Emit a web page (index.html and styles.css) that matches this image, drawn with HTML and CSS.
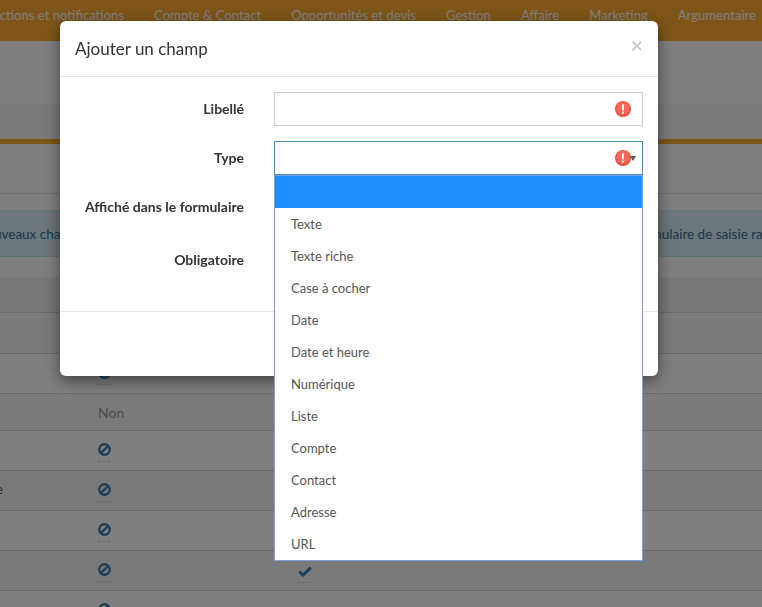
FILE: index.html
```html
<!DOCTYPE html>
<html lang="fr">
<head>
<meta charset="utf-8">
<title>Ajouter un champ</title>
<link rel="stylesheet" href="styles.css">
</head>
<body>
<svg class="defs" width="0" height="0" aria-hidden="true">
  <symbol id="ban" viewBox="0 0 13 13"><circle cx="6.5" cy="6.5" r="5.2" fill="none" stroke="currentColor" stroke-width="2.4"/><path d="M3 10 10 3" stroke="currentColor" stroke-width="2.4"/></symbol>
  <symbol id="check" viewBox="0 0 14 11"><path d="M1.2 5.4 5 9 12.8 1.6" fill="none" stroke="currentColor" stroke-width="3"/></symbol>
  <symbol id="alert" viewBox="0 0 16 16"><circle cx="8" cy="8" r="8" fill="#e9503f"/><circle cx="8" cy="7" r="6.6" fill="#f4695a"/><rect x="7" y="3.2" width="2" height="6.3" rx=".8" fill="#fff"/><rect x="7" y="10.6" width="2" height="2.1" rx=".6" fill="#fff"/></symbol>
</svg>
<div class="page">
  <nav class="nav">
    <a>Actions et notifications</a><a>Compte &amp; Contact</a><a>Opportunités et devis</a><a>Gestion</a><a>Affaire</a><a>Marketing</a><a>Argumentaire</a>
  </nav>
  <div class="band-title"></div>
  <div class="band-tabs"></div>
  <div class="rule"></div>
  <div class="band-sub"></div>
  <div class="info"><span class="info-left">Ajoutez ici de nouveaux champs</span><span class="info-right">du formulaire de saisie rapide</span></div>
  <div class="thead"></div>
  <div class="row tall"></div>
  <div class="row alt"><span></span><span class="cell"><svg class="ban"><use href="#ban"/></svg></span></div>
  <div class="row short"><span></span><span class="cell non">Non</span></div>
  <div class="row alt"><span></span><span class="cell"><svg class="ban"><use href="#ban"/></svg></span></div>
  <div class="row"><span class="first">Téléphone</span><span class="cell"><svg class="ban"><use href="#ban"/></svg></span></div>
  <div class="row alt"><span></span><span class="cell"><svg class="ban"><use href="#ban"/></svg></span></div>
  <div class="row"><span></span><span class="cell"><svg class="ban"><use href="#ban"/></svg></span><span class="cell"><svg class="check"><use href="#check"/></svg></span></div>
  <div class="row alt"><span></span><span class="cell"><svg class="ban"><use href="#ban"/></svg></span><span class="cell"><svg class="check"><use href="#check"/></svg></span></div>
</div>
<div class="backdrop"></div>
<div class="modal">
  <div class="modal-header"><h4>Ajouter un champ</h4><span class="close">×</span></div>
  <div class="modal-body">
    <div class="form-row"><label>Libellé</label><div class="field"><svg class="alert"><use href="#alert"/></svg></div></div>
    <div class="form-row"><label>Type</label>
      <div class="field focus"><svg class="alert"><use href="#alert"/></svg><span class="caret"></span>
        <ul class="dropdown">
          <li class="selected"></li><li>Texte</li><li>Texte riche</li><li>Case à cocher</li><li>Date</li><li>Date et heure</li><li>Numérique</li><li>Liste</li><li>Compte</li><li>Contact</li><li>Adresse</li><li>URL</li>
        </ul>
      </div>
    </div>
    <div class="form-row tall"><label>Affiché dans le formulaire</label></div>
    <div class="form-row tall"><label>Obligatoire</label></div>
  </div>
  <div class="modal-footer"></div>
</div>
</body>
</html>
```
FILE: styles.css
```css
* { box-sizing: border-box; }
html, body { margin: 0; height: 100%; overflow: hidden; }
body { font-family: Lato, "Liberation Sans", sans-serif; font-size: 14px; color: #333; background: #fff; }
.defs { position: absolute; }
.page { height: 607px; overflow: hidden; background: #fff; }

.nav { height: 41px; background: #fbaa30; display: flex; justify-content: flex-end; gap: 30px; padding: 6px 6px 0 0; white-space: nowrap; color: #fff; font-size: 13.1px; line-height: 18px; }
.band-title { height: 63px; background: #fff; }
.band-tabs { height: 35px; background: #f5f5f5; }
.rule { height: 5px; background: #fbaa30; }
.band-sub { height: 50px; background: #fff; border-bottom: 1px solid #ddd; }
.info { height: 47px; margin-top: 16px; background: #d9edf7; border-top: 1px solid #bce8f1; border-bottom: 1px solid #bce8f1; display: flex; align-items: center; white-space: nowrap; color: #31708f; font-size: 13.5px; overflow: hidden; }
.info-left { flex: 0 0 85px; min-width: 0; display: flex; justify-content: flex-end; }
.info-right { margin-left: 530px; }
.thead { height: 36px; margin-top: 20px; background: #eee; border-bottom: 1px solid #d4d4d4; }

.row { height: 40px; background: #f5f5f5; border-bottom: 1px solid #d4d4d4; display: grid; grid-template-columns: 98px 200px 1fr; align-items: start; white-space: nowrap; }
.row.alt { background: #fff; }
.row.short { height: 37px; }
.row.tall { height: 41px; }
.first { display: flex; justify-content: flex-end; padding: 9px 95px 0 0; color: #555; }
.cell { padding-top: 12px; display: block; color: #3a7fae; }
.non { padding-top: 9px; color: #999; line-height: 20px; }
.ban { width: 13px; height: 13px; display: block; }
.check { width: 14px; height: 11px; display: block; margin-top: 3px; }
.cell::after { content: ""; display: block; width: 12px; margin-top: 5px; border-bottom: 1px dashed #ccc; }
.check + ::after { width: 14px; }
.non::after { display: none; }

.backdrop { position: fixed; inset: 0; background: rgba(0, 0, 0, .5); }
.modal { position: fixed; left: 60px; top: 21px; width: 598px; background: #fff; border-radius: 6px; box-shadow: 0 5px 15px rgba(0, 0, 0, .5); }
.modal-header { height: 56px; padding: 15px; border-bottom: 1px solid #e5e5e5; display: flex; justify-content: space-between; }
.modal-header h4 { margin: 0; font-size: 17px; font-weight: 400; line-height: 25px; color: #333; }
.close { font-size: 21px; font-weight: 700; line-height: 18px; color: #c9c9c9; }
.modal-body { padding: 15px; }
.form-row { display: grid; grid-template-columns: 169px 369px; column-gap: 30px; margin-bottom: 15px; min-height: 34px; }
.form-row.tall { min-height: 38px; }
.form-row label { font-weight: 700; text-align: right; line-height: 20px; padding-top: 7px; color: #333; }
.field { position: relative; height: 34px; border: 1px solid #ccc; background: #fff; display: flex; align-items: center; justify-content: flex-end; padding-right: 11px; }
.field.focus { border-color: #4a90bd; }
.alert { width: 16px; height: 16px; display: block; }
.caret { position: absolute; right: 6px; top: 14px; border-left: 3.5px solid transparent; border-right: 3.5px solid transparent; border-top: 5px solid #555; }
.dropdown { position: absolute; left: -1px; top: 33px; width: 369px; margin: 0; padding: 0; list-style: none; background: #fff; border: 1px solid #7ea3d9; color: #555; font-size: 13px; }
.dropdown li { height: 32px; line-height: 32px; padding-left: 16px; }
.dropdown li.selected { background: #1e90ff; }
.modal-footer { height: 65px; border-top: 1px solid #e5e5e5; }
```
